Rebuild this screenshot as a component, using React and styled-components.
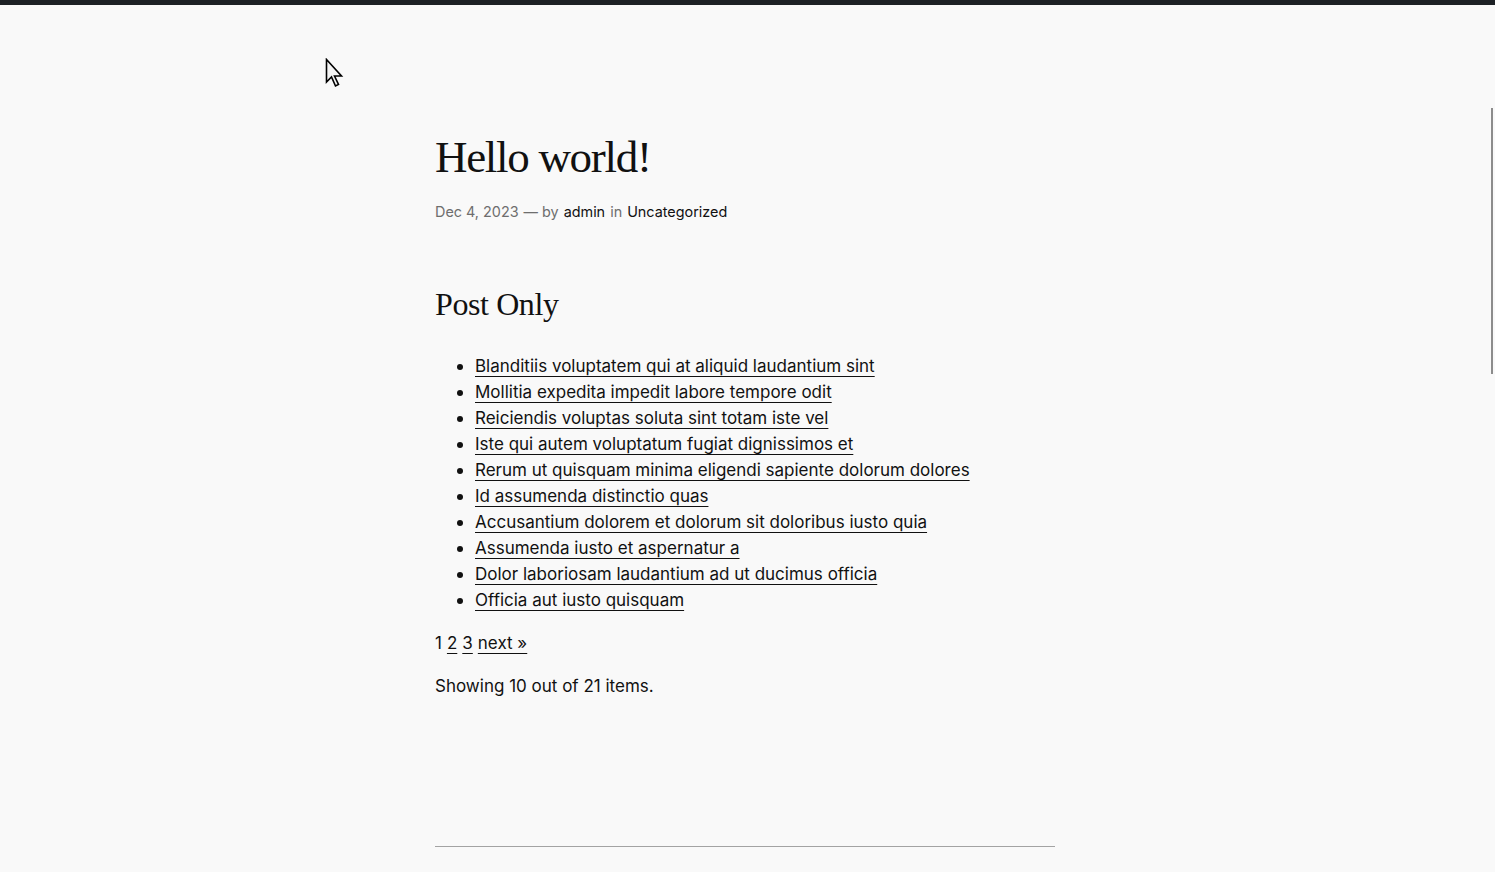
import React from 'react';
import styled, { createGlobalStyle } from 'styled-components';

const GlobalStyle = createGlobalStyle`
  html, body {
    margin: 0;
    padding: 0;
    background: #f9f9f9;
  }
  body {
    font-family: "Inter", "Liberation Sans", sans-serif;
    color: #111111;
    overflow: hidden;
  }
`;

const AdminBar = styled.div`
  height: 5px;
  background: #1d2125;
`;

const Page = styled.div`
  position: relative;
  height: 867px;
  padding-right: 5px;
`;

const Main = styled.main`
  max-width: 620px;
  margin: 0 auto;
  padding-top: 125px;
`;

const Title = styled.h1`
  font-family: "Liberation Serif", "DejaVu Serif", serif;
  font-weight: 400;
  font-size: 45px;
  letter-spacing: -1.3px;
  line-height: 1.2;
  margin: 0;
  color: #111111;
`;

const Meta = styled.div`
  margin-top: 18px;
  font-size: 14.4px;
  line-height: 20px;
  color: #6e6e6e;
  display: flex;
  gap: 5px;
`;

const MetaLink = styled.a`
  color: #111111;
  text-decoration: none;
`;

const SectionTitle = styled.h2`
  font-family: "Liberation Serif", "DejaVu Serif", serif;
  font-weight: 400;
  font-size: 32px;
  letter-spacing: -0.4px;
  line-height: 1.2;
  margin: 63px 0 0;
  color: #111111;
`;

const List = styled.ul`
  margin: 30px 0 0;
  padding-left: 40px;
  font-size: 17px;
  line-height: 26px;
`;

const Item = styled.li`
  &::marker {
    font-size: 18px;
  }
`;

const TextLink = styled.a`
  color: #111111;
  text-decoration: underline;
  text-decoration-thickness: 1px;
  text-underline-offset: 4px;
`;

const Pagination = styled.div`
  margin-top: 17px;
  font-size: 17px;
  line-height: 26px;
  display: flex;
  gap: 5px;
`;

const Summary = styled.p`
  margin: 17px 0 0;
  font-size: 17px;
  line-height: 26px;
`;

const Divider = styled.hr`
  border: 0;
  border-top: 1px solid #a3a3a3;
  margin: 147px 0 0;
`;

const Cursor = styled.svg`
  position: absolute;
  left: 325px;
  top: 53px;
`;

const ScrollThumb = styled.div`
  position: absolute;
  right: 2px;
  top: 103px;
  width: 2px;
  height: 266px;
  background: #8c8c8c;
`;

const posts = [
  'Blanditiis voluptatem qui at aliquid laudantium sint',
  'Mollitia expedita impedit labore tempore odit',
  'Reiciendis voluptas soluta sint totam iste vel',
  'Iste qui autem voluptatum fugiat dignissimos et',
  'Rerum ut quisquam minima eligendi sapiente dolorum dolores',
  'Id assumenda distinctio quas',
  'Accusantium dolorem et dolorum sit doloribus iusto quia',
  'Assumenda iusto et aspernatur a',
  'Dolor laboriosam laudantium ad ut ducimus officia',
  'Officia aut iusto quisquam',
];

const App = () => {
  return (
    <>
      <GlobalStyle />
      <AdminBar />
      <Page>
        <Cursor width="22" height="30" viewBox="0 0 22 30">
          <path
            d="M1.5 1.5 L1.5 24 L6.5 19 L10.5 28 L13.5 26.5 L9.5 18 L16.5 18 Z"
            fill="#f4f4f4"
            stroke="#000"
            strokeWidth="1.6"
            strokeLinejoin="miter"
          />
        </Cursor>
        <Main>
          <Title>Hello world!</Title>
          <Meta>
            <span>Dec 4, 2023</span>
            <span>— by</span>
            <MetaLink href="#">admin</MetaLink>
            <span>in</span>
            <MetaLink href="#">Uncategorized</MetaLink>
          </Meta>
          <SectionTitle>Post Only</SectionTitle>
          <List>
            {posts.map((p) => (
              <Item key={p}>
                <TextLink href="#">{p}</TextLink>
              </Item>
            ))}
          </List>
          <Pagination>
            <span>1</span>
            <TextLink href="#">2</TextLink>
            <TextLink href="#">3</TextLink>
            <TextLink href="#">next »</TextLink>
          </Pagination>
          <Summary>Showing 10 out of 21 items.</Summary>
          <Divider />
        </Main>
        <ScrollThumb />
      </Page>
    </>
  );
};

export default App;
